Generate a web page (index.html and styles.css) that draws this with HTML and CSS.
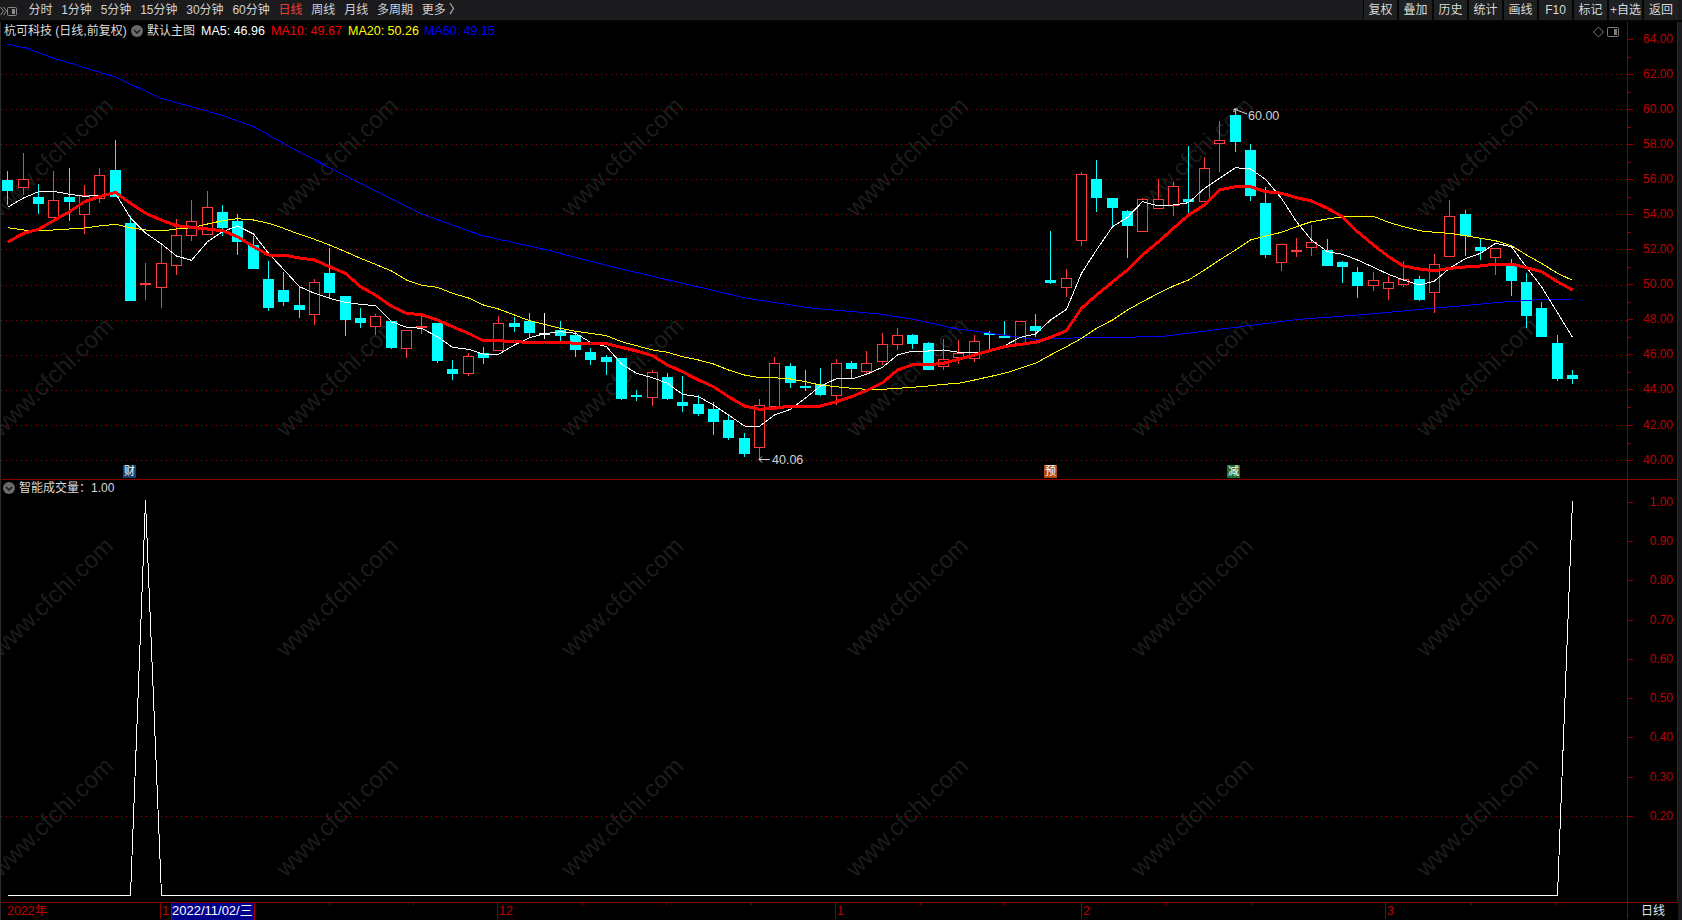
FILE: index.html
```html
<!DOCTYPE html>
<html lang="zh-CN">
<head>
<meta charset="utf-8">
<title>杭可科技 日线</title>
<link rel="stylesheet" href="styles.css">
</head>
<body>
<div class="app">
  <header class="toolbar">
    <div class="tool-icon">
      <svg width="18" height="22" viewBox="0 0 18 22"><path class="ti-line" d="M0.5 7l3 4-3 4M3.5 7l3 4-3 4"/><rect class="ti-box" x="7.5" y="7.5" width="9" height="8" rx="1"/><rect class="ti-fill" x="12" y="9" width="3" height="5"/></svg>
    </div>
    <nav class="periods">
      <span class="period">分时</span><span class="period">1分钟</span><span class="period">5分钟</span><span class="period">15分钟</span><span class="period">30分钟</span><span class="period">60分钟</span><span class="period active">日线</span><span class="period">周线</span><span class="period">月线</span><span class="period">多周期</span><span class="period">更多 〉</span>
    </nav>
    <div class="actions">
      <span class="action">复权</span><span class="action">叠加</span><span class="action">历史</span><span class="action">统计</span><span class="action">画线</span><span class="action">F10</span><span class="action">标记</span><span class="action">+自选</span><span class="action">返回</span>
    </div>
  </header>
  <div class="body">
    <div class="charts">
      <div id="watermarks" class="watermarks"></div>
      <section class="pane pane-main">
        <div class="plot">
          <svg id="mainChart" class="chart" width="1626" height="457" viewBox="1 22 1626 457"></svg>
          <div class="legend">
            <span class="stock">杭可科技 (日线,前复权)</span>
            <svg class="chev" width="12" height="12" viewBox="0 0 12 12"><circle class="chev-bg" cx="6" cy="6" r="6"/><path class="chev-mark" d="M3 5l3 3 3-3"/></svg>
            <span class="lg-name">默认主图</span>
            <span class="lg ma5">MA5: 46.96</span>
            <span class="lg ma10">MA10: 49.67</span>
            <span class="lg ma20">MA20: 50.26</span>
            <span class="lg ma60">MA60: 49.15</span>
          </div>
          <div class="corner">
            <svg width="28" height="12" viewBox="0 0 28 12"><path class="c-diamond" d="M5.5 1l5 5-5 5-5-5z"/><rect class="c-box" x="14.5" y="1.5" width="11" height="9" rx="1"/><rect class="c-fill" x="21" y="3" width="3" height="6"/></svg>
          </div>
          <span class="mark mark-high">60.00</span>
          <span class="mark mark-low">40.06</span>
          <span class="badge badge-cai">财</span>
          <span class="badge badge-yu">预</span>
          <span class="badge badge-jian">减</span>
        </div>
        <div class="axis axis-main">
          <div class="tick-row minor">64.00</div><div class="tick-row minor">62.00</div><div class="tick-row minor">60.00</div><div class="tick-row minor">58.00</div><div class="tick-row minor">56.00</div><div class="tick-row minor">54.00</div><div class="tick-row minor">52.00</div><div class="tick-row minor">50.00</div><div class="tick-row minor">48.00</div><div class="tick-row minor">46.00</div><div class="tick-row minor">44.00</div><div class="tick-row minor">42.00</div><div class="tick-row">40.00</div>
        </div>
      </section>
      <section class="pane pane-sub">
        <div class="plot">
          <svg id="subChart" class="chart" width="1626" height="422" viewBox="1 480 1626 422"></svg>
          <div class="legend legend-sub">
            <svg class="chev" width="12" height="12" viewBox="0 0 12 12"><circle class="chev-bg" cx="6" cy="6" r="6"/><path class="chev-mark" d="M3 5l3 3 3-3"/></svg>
            <span class="lg-sub">智能成交量：1.00</span>
          </div>
        </div>
        <div class="axis axis-sub">
          <div class="sub-row">1.00</div><div class="sub-row">0.90</div><div class="sub-row">0.80</div><div class="sub-row">0.70</div><div class="sub-row">0.60</div><div class="sub-row">0.50</div><div class="sub-row">0.40</div><div class="sub-row">0.30</div><div class="sub-row">0.20</div>
        </div>
      </section>
      <footer class="timeaxis">
        <div id="timeScale" class="time-scale">
          <span class="date-tag">2022/11/02/三</span>
        </div>
        <div class="time-unit">日线</div>
      </footer>
    </div>
    <div class="strip"></div>
  </div>
</div>
<script src="chart.js"></script>
</body>
</html>
```
FILE: styles.css
```css
* { box-sizing: border-box; }
html, body { margin: 0; padding: 0; background: #000; }
body { font-family: "Liberation Sans", "Noto Sans CJK SC", sans-serif; font-size: 12px; color: #ddd; overflow: hidden; }
.app { width: 1682px; height: 920px; display: flex; flex-direction: column; }

.toolbar { height: 22px; flex: none; display: flex; background: #1b1b1d; border-bottom: 2px solid #050505; }
.tool-icon { width: 24px; flex: none; }
.tool-icon svg { display: block; margin-top: 0; }
.ti-line { fill: none; stroke: #8a8a8a; stroke-width: 1; }
.ti-box { fill: #1b1b1d; stroke: #8a8a8a; }
.ti-fill { fill: #8a8a8a; }
.periods { display: flex; align-items: center; }
.period { padding: 0 4.4px; color: #d2d2d2; line-height: 20px; white-space: nowrap; }
.period.active { color: #e8413a; }
.actions { margin-left: auto; margin-right: 4px; display: flex; }
.action { width: 35px; height: 20px; line-height: 20px; text-align: center; white-space: nowrap; color: #d8d8d8; background: #1f2022; border-left: 1px solid #060606; border-right: 1px solid #060606; font-size: 12px; }
.action:last-child { border-right: 0; }

.body { flex: 1; display: flex; min-height: 0; }
.charts { position: relative; flex: 1; display: flex; flex-direction: column; border-left: 1px solid #2c2c2c; min-width: 0; }
.strip { width: 4px; flex: none; background: #1b1b1d; }

.watermarks { position: absolute; inset: 0; overflow: hidden; pointer-events: none; z-index: 0; }
.wm { position: absolute; width: 200px; margin: -15px 0 0 -100px; text-align: center; font-size: 24px; line-height: 30px; color: #1c1c1c; transform: rotate(-44deg); white-space: nowrap; }

.pane { position: relative; z-index: 1; display: flex; flex: none; }
.pane-main { height: 458px; border-bottom: 1px solid #8a0000; }
.pane-sub { height: 423px; border-bottom: 1px solid #8a0000; }
.plot { position: relative; width: 1626px; flex: none; }
.chart { display: block; }

.legend { position: absolute; left: 3px; top: 1px; height: 16px; display: flex; align-items: center; white-space: nowrap; font-size: 12.5px; line-height: 16px; }
.stock { width: 127px; font-size: 12px; color: #dcdcdc; }
.chev { flex: none; margin-right: 4px; }
.chev-bg { fill: #6a6a6a; }
.chev-mark { fill: none; stroke: #1a1a1a; stroke-width: 1.5; }
.lg-name { width: 54px; font-size: 12px; color: #dcdcdc; }
.lg { flex: none; }
.ma5 { width: 70px; color: #fff; }
.ma10 { width: 77px; color: #f00; }
.ma20 { width: 76px; color: #ff0; }
.ma60 { color: #0000ff; }
.legend-sub { left: 2px; top: 0; font-size: 12px; }
.lg-sub { color: #dcdcdc; }

.corner { position: absolute; left: 1592px; top: 4px; width: 28px; height: 12px; }
.corner svg { display: block; }
.c-diamond { fill: none; stroke: #7c7c7c; }
.c-box { fill: none; stroke: #7c7c7c; }
.c-fill { fill: #7c7c7c; }

.mark { position: absolute; color: #cfd4d8; font-size: 12.5px; line-height: 14px; }
.mark-high { left: 1247px; top: 87px; }
.mark-low { left: 771px; top: 431px; }

.badge { position: absolute; top: 443px; width: 13px; height: 13px; line-height: 13px; text-align: center; color: #fff; font-size: 11px; overflow: hidden; }
.badge-cai { left: 122px; background: #17406e; }
.badge-yu { left: 1043px; background: #b44a12; }
.badge-jian { left: 1226px; background: #1e6e2e; }

.axis { width: 51px; flex: none; border-left: 1px solid #8a0000; border-right: 1px solid #8a0000; color: #c00000; }
.tick-row { position: relative; height: 35.05px; line-height: 35.05px; text-align: right; padding-right: 4px; }
.tick-row::before { content: ""; position: absolute; left: 0; top: 17px; width: 5px; height: 1px; background: #8a0000; }
.tick-row.minor::after { content: ""; position: absolute; left: 0; top: 35px; width: 3px; height: 1px; background: #8a0000; }
.axis-sub { padding-top: 2.65px; }
.sub-row { position: relative; height: 39.3px; line-height: 39.3px; text-align: right; padding-right: 4px; }
.sub-row::before { content: ""; position: absolute; left: 0; top: 19px; width: 5px; height: 1px; background: #8a0000; }

.timeaxis { position: relative; z-index: 1; flex: 1; display: flex; min-height: 0; }
.time-scale { position: relative; width: 1626px; flex: none; color: #c00000; }
.t-major { position: absolute; top: 0; bottom: 1px; width: 1px; background: #8a0000; }
.t-minor { position: absolute; top: 0; width: 1px; height: 2px; background: #8a0000; }
.t-label { position: absolute; top: 0; line-height: 17px; font-size: 12.5px; white-space: nowrap; }
.date-tag { position: absolute; left: 170px; top: 0; width: 84px; height: 17px; line-height: 16px; font-size: 13px; background: #00008b; color: #fff; border-left: 1px solid #a00000; border-right: 1px solid #a00000; white-space: nowrap; overflow: hidden; z-index: 2; }
.time-unit { flex: 1; border-left: 1px solid #8a0000; margin-bottom: 1px; text-align: center; line-height: 16px; color: #dfe6ee; }

.grid { stroke: #b00000; stroke-width: 1; stroke-dasharray: 1 4; }
.candle-up { fill: #000; stroke: #ff3c3c; stroke-width: 1; }
.candle-dn { fill: #0ff; stroke: #0ff; stroke-width: 1; }
.candle-wt { fill: #fff; stroke: #fff; stroke-width: 1; }
.wick-up { stroke: #ff3c3c; stroke-width: 1; }
.wick-dn { stroke: #0ff; stroke-width: 1; }
.wick-wt { stroke: #fff; stroke-width: 1; }
.line { fill: none; shape-rendering: crispEdges; stroke-linejoin: round; }
.l-ma5 { stroke: #fff; stroke-width: 1; }
.l-ma10 { stroke: #f00; stroke-width: 3; }
.l-ma20 { stroke: #ff0; stroke-width: 1; }
.l-ma60 { stroke: #0000ff; stroke-width: 1; }
.l-vol { stroke: #fff; stroke-width: 1; }
.arrow { fill: none; stroke: #cfd4d8; stroke-width: 1; }
```
FILE: chart.js
```javascript
(function () {
  var SVG = 'http://www.w3.org/2000/svg';
  function el(parent, name, attrs) {
    var n = document.createElementNS(SVG, name);
    for (var k in attrs) n.setAttribute(k, attrs[k]);
    parent.appendChild(n);
    return n;
  }
  function X(i) { return Math.floor(7.8 + 15.34 * i) + 0.5; }

  // type, high, body top, body bottom, low (screen y of each price)
  var candles = [
    ['d',171.7,180,190,205],['u',153,179.3,187.3,195],['d',184,197.3,203.7,214],['u',171.3,200.3,217.7,217.7],
    ['d',168,197,201,220.7],['u',185,195.3,214.3,234],['u',168,175.3,198.3,202.7],['d',140,170,196.7,196.7],
    ['d',216,223.3,300,300],['u',263.3,283.7,284.7,300],['u',243,263.3,287.3,307.7],['u',219,235.3,265.3,275],
    ['u',200,221.3,235.7,240.7],['u',191,207.3,234.7,234.7],['d',205,212,227,236],['d',214,221,241,255],
    ['d',236.7,245,268.7,268.7],['d',261,279,307.7,311],['d',272.3,290,301,306],['d',286.7,305,309,318],
    ['u',279,282.3,314.7,325],['d',248.3,273.3,292,297.3],['d',296,296,319,335.7],['d',308.3,318,322,328],
    ['u',314.3,316.3,326.7,335],['d',321,321,347.7,349],['u',330.3,330.3,348.3,357.7],['u',316,326,327,334],
    ['d',323.3,323.3,360,362.7],['d',360,369,373,380],['u',353.3,356.3,373.7,376],['d',347.3,353,357,364],
    ['u',316,323.3,350.7,350.7],['d',317.3,323,326,332],['d',313,321,332,337],['w',313,333,334,338.7],
    ['d',321,330,335,341.3],['d',332,335,349,357],['d',348,352,359,365],['d',355,357,361,375],
    ['d',358,358,398,400],['d',390,395,396,401],['u',370,372,397,406],['d',373,377,398,400],
    ['d',376,402,405,412],['d',395,404,413,416],['d',402,409,421,435],['d',416,420,437,440],
    ['d',433,438,453,457],['u',399,405,447.7,460],['u',357,363.3,406,406],['d',363,366,382,388],
    ['d',370,386,387,391],['d',368,384.7,394,396],['u',359,363,395.7,405],['d',361,363,368,379],
    ['u',351,363.3,371.7,374],['u',333.3,344.3,361,365],['u',328,335.3,344.7,349.7],['d',334,335.3,343,349],
    ['d',342,343,369,369],['u',339,359.3,366.7,370],['u',340,353.3,357.3,364],['u',335.3,341.3,358.7,362],
    ['d',331,333.3,334.3,349],['d',321,336,337,338],['u',321.3,321.3,343,343],['d',314,326,330,337],
    ['d',231.7,280.7,282,284],['u',269,278.3,287.7,296.7],['u',172,174.3,240.3,245.7],['d',160,179.3,197.7,211.7],
    ['d',198,198,207.7,226],['d',210,211.3,225,257.7],['u',198.3,199.3,231.3,231.7],['u',179.3,199.3,208.7,208.7],
    ['u',182.3,186.3,205.3,216],['d',146,199,201,214],['u',157,168.3,201.3,201.7],['u',121,140.3,143,172],
    ['d',110,115,141,152],['d',144,150,195,201],['d',187.3,203,254,257.3],['u',244,244.3,262.3,271],
    ['u',238,250,251,256.7],['u',225,242.3,247.3,256],['d',239,250,265.7,265.7],['d',261,262.3,266.7,283],
    ['d',267.3,272,285,297.7],['u',272,280.3,285.7,291],['u',276.7,282.3,288.7,300],['u',261,279,284,287],
    ['d',276,279,299,301],['u',254,264,292.7,313],['u',200,216,256.7,256.7],['d',210,214,235,256],
    ['d',239,247,250,260],['u',248.3,248.3,257.7,275],['d',259.3,266,280,296],['d',273,282,315,328],
    ['d',302,308,336.7,336.7],['d',335,343,378,381],['d',370,375,378,384]
  ];

  var ma5 = [207.3,198,191.7,191.3,194.3,196.3,195.3,193.3,218,233,
    244,256,260.3,241.7,231.7,226,234,253.3,269.3,286.7,
    293.3,298.3,302.3,304.3,305.7,321.7,327.3,328.3,336.7,347.3,
    349.3,354,354.3,345,337.7,333.7,331.7,333.3,342.3,346.7,
    364,373.3,377.7,383.3,394.3,396.7,405,415,426,426.3,
    415,409.3,398,386,378.7,379,374.3,367.3,355,351,
    351,350,352.3,353,351,345.7,337.3,334,320,309.3,
    273.3,250,226.7,217.3,201.7,206,205,202.7,188.3,178.3,
    167.7,169,179.3,198.3,221.7,240,251.7,254.3,260,267.3,
    274.3,280,285,281,268.3,258.7,253.3,243.3,246.7,267.3,
    286.7,312.7,337.3];
  var ma10 = [242.3,233.3,229.3,220.7,211.7,201.7,196.7,192.3,203.3,213.3,
    220,225.7,227.3,229,230.7,236.7,246.7,255,255,258,
    260,266.7,273.3,286.7,295,306.3,313.3,314.7,320,326.7,
    333.3,340.7,340.7,341.7,342.3,342,342.3,343.3,343.7,343.7,
    347.3,351,355.7,365,371.7,380,386.7,396.7,406,409.3,
    408.3,406,406,406,401.7,396.7,390.7,382.7,370,364.7,
    364.7,363.3,359.3,355,350.7,346.7,344.3,342.3,337.3,330.7,
    308.3,295,282,270,255,241.7,228.3,215,205,190,
    186.7,186.7,191.7,193.3,197.7,201,208.3,216.7,231.7,245,
    256.7,266,269,270.7,268.3,267,266,264,264,267.7,
    271.7,281.7,290];
  var ma20 = [227.7,230,231,230,229,228,226,224.3,227.7,230,
    231,229,227.7,224,220.7,218.7,220,223.3,228.3,234.3,
    239.3,245,251.7,258.3,264.3,271,280,285.3,287.3,293.3,
    298,305,309,315,320.7,324.3,328.3,331.3,333.3,335.7,
    341.7,345.7,350,352.3,356.7,360,364,370,375,377.7,
    377.7,379,381.7,385,386.7,388.3,389.3,389.3,388.3,387.3,
    386,384.3,383.3,380,376.7,373.3,368.3,363.3,355,346.7,
    338.3,328.3,320,310,301.7,293.3,286,280,270,260,
    250,240,236,232.3,226.7,221.7,219,216.7,216.3,216.3,
    222.3,226.7,230.7,232.3,233.3,235.7,238.3,240.7,245.7,255,
    263.3,273.3,280.3];
  var ma60 = [[7,44.3],[25,47.7],[54,58.3],[114,76.7],[161,98.3],[221,115],[254,126.7],[286,145],[321,163.3],[357,181.7],
    [420,213.3],[480,235],[547,250],[613,267],[680,282.7],[747,298.3],[813,308.3],[880,314],[917,320],[957,329],
    [987,332.7],[1033,339.3],[1083,337.7],[1160,336.7],[1200,331.7],[1300,319.3],[1367,314.3],[1433,308.3],[1500,302.3],[1533,300],[1572,299.3]];

  var main = document.getElementById('mainChart');
  var sub = document.getElementById('subChart');

  for (var g = 0; g < 12; g++) {
    var gy = Math.floor(74.7 + 35.05 * g) + 0.5;
    el(main, 'line', { 'class': 'grid', x1: 1, x2: 1627, y1: gy, y2: gy });
  }
  el(sub, 'line', { 'class': 'grid', x1: 1, x2: 1627, y1: 816.5, y2: 816.5 });

  candles.forEach(function (c, i) {
    var x = X(i), t = c[0];
    var kind = t === 'u' ? 'up' : t === 'd' ? 'dn' : 'wt';
    var top = Math.floor(c[2]) + 0.5, bot = Math.floor(c[3]) + 0.5;
    el(main, 'line', { 'class': 'wick-' + kind, x1: x, x2: x, y1: Math.floor(c[1]), y2: Math.ceil(c[4]) });
    el(main, 'rect', { 'class': 'candle-' + kind, x: x - 5, y: top, width: 10, height: bot - top, 'shape-rendering': 'crispEdges' });
  });

  function series(arr) {
    return arr.map(function (y, i) { return X(i) + ',' + y; }).join(' ');
  }
  el(main, 'polyline', { 'class': 'line l-ma60', points: ma60.map(function (p) { return p.join(','); }).join(' ') });
  el(main, 'polyline', { 'class': 'line l-ma20', points: series(ma20) });
  el(main, 'polyline', { 'class': 'line l-ma5', points: series(ma5) });
  el(main, 'polyline', { 'class': 'line l-ma10', points: series(ma10) });

  el(main, 'path', { 'class': 'arrow', d: 'M1234 109l13 5M1234 109h4M1234 109v3' });
  el(main, 'path', { 'class': 'arrow', d: 'M759 459.5h11M759 459.5l3-3M759 459.5l3 3' });

  el(sub, 'polyline', { 'class': 'line l-vol', points: [[X(0), 895.5], [X(8), 895.5], [X(9), 501], [X(10), 895.5], [X(101), 895.5], [X(102), 501]].map(function (p) { return p.join(','); }).join(' ') });

  var wm = document.getElementById('watermarks');
  for (var r = 0; r < 4; r++) {
    for (var k = 0; k < 6; k++) {
      var s = document.createElement('span');
      s.className = 'wm';
      s.textContent = 'www.cfchi.com';
      s.style.left = (51 + 285 * k) + 'px';
      s.style.top = (157 + 220 * r - 22) + 'px';
      wm.appendChild(s);
    }
  }

  var scale = document.getElementById('timeScale');
  function add(cls, left, text) {
    var d = document.createElement('div');
    d.className = cls;
    d.style.left = left + 'px';
    if (text) d.textContent = text;
    scale.appendChild(d);
  }
  [[159, '1'], [496, '12'], [834, '1'], [1080, '2'], [1384, '3']].forEach(function (m) {
    add('t-major', m[0]);
    add('t-label', m[0] + 2, m[1]);
  });
  add('t-label', 6, '2022年');
  [328, 412, 581, 665, 750, 919, 1003, 1165, 1250, 1470, 1555].forEach(function (x) { add('t-minor', x); });
})();
```
